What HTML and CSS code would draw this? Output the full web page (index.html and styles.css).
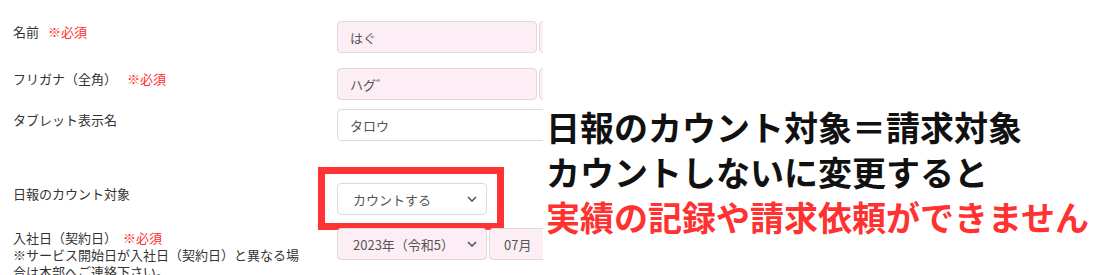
FILE: index.html
```html
<!DOCTYPE html>
<html lang="ja">
<head>
   <meta charset="UTF-8">
   <meta name="viewport" content="width=device-width, initial-scale=1.0">
   <title>日報のカウント対象</title>
   <link rel="stylesheet" href="styles.css">
</head>
<body>
   <div class="page">
       <div class="form">
           <div class="row row-name">
               <div class="label">名前 <span class="req">※必須</span></div>
               <div class="fields">
                   <div class="input pink w-half">はぐ</div>
                   <div class="input pink w-rest"></div>
               </div>
           </div>

           <div class="row row-kana">
               <div class="label">フリガナ（全角）<span class="req">※必須</span></div>
               <div class="fields">
                   <div class="input pink w-half">ハグ゛</div>
                   <div class="input pink w-rest"></div>
               </div>
           </div>

           <div class="row row-tablet">
               <div class="label">タブレット表示名</div>
               <div class="fields">
                   <div class="input w-full">タロウ</div>
               </div>
           </div>

           <div class="row row-count">
               <div class="label">日報のカウント対象</div>
               <div class="fields">
                   <div class="highlight">
                       <div class="select">
                           <span>カウントする</span>
                           <svg class="chevron" width="10" height="6" viewBox="0 0 10 6"><path d="M1 1 L5 5 L9 1" fill="none" stroke="#555" stroke-width="1.6"/></svg>
                       </div>
                   </div>
               </div>
           </div>

           <div class="row row-date">
               <div class="label">
                   入社日（契約日）<span class="req">※必須</span><br>
                   ※サービス開始日が入社日（契約日）と異なる場合は本部へご連絡下さい。
               </div>
               <div class="fields">
                   <div class="select pink">
                       <span>2023年（令和5）</span>
                       <svg class="chevron" width="10" height="6" viewBox="0 0 10 6"><path d="M1 1 L5 5 L9 1" fill="none" stroke="#555" stroke-width="1.6"/></svg>
                   </div>
                   <div class="input pink w-month">07月</div>
               </div>
           </div>
       </div>

       <div class="note">
           <p>日報のカウント対象＝請求対象</p>
           <p>カウントしないに変更すると</p>
           <p class="alert">実績の記録や請求依頼ができません</p>
       </div>
   </div>
</body>
</html>
```

FILE: styles.css
```css
body {
    margin: 0;
    background-color: #ffffff;
    font-family: "Noto Sans CJK JP", "Noto Sans", sans-serif;
    color: #333;
}

.page {
    display: flex;
    width: 1099px;
    height: 275px;
    overflow: hidden;
}

.form {
    width: 543px;
    flex-shrink: 0;
    overflow: hidden;
    padding-top: 21px;
    font-size: 13px;
}

.row {
    display: flex;
}

.label {
    width: 337px;
    flex-shrink: 0;
    padding-left: 13px;
    padding-right: 30px;
    box-sizing: border-box;
    line-height: 17px;
}

.req {
    color: #ff2b2b;
    margin-left: 6px;
}

.row-kana .req {
    margin-left: 10px;
}

.fields {
    display: flex;
    gap: 2px;
    width: 240px;
    flex-shrink: 0;
}

.row-name .label,
.row-kana .label,
.row-tablet .label {
    padding-top: 2px;
}

.row-kana {
    margin-top: 15px;
}

.row-tablet {
    margin-top: 9px;
}

.row-count {
    margin-top: 26px;
}

.row-count .label {
    width: 318px;
    padding-top: 18px;
}

.row-date {
    margin-top: -2px;
}

.row-date .label {
    padding-top: 1px;
}

.input,
.select {
    height: 32px;
    box-sizing: border-box;
    border: 1px solid #dedada;
    border-radius: 4px;
    background-color: #fff;
    color: #555;
    display: flex;
    align-items: center;
    padding-left: 12px;
    flex-shrink: 0;
}

.pink {
    background-color: #fdedf4;
}

.w-half {
    width: 200px;
}

.w-rest {
    width: 30px;
}

.w-full {
    width: 220px;
}

.w-month {
    width: 60px;
    padding-left: 14px;
}

.highlight {
    border: 7px solid #ff3333;
    padding: 9px 10px 8px 12px;
}

.select {
    width: 150px;
    justify-content: space-between;
    padding-left: 15px;
    padding-right: 9px;
}

.chevron {
    display: block;
}

.note {
    padding-top: 104px;
    padding-left: 3px;
    font-size: 34px;
    font-weight: bold;
    color: #111;
    white-space: nowrap;
}

.note p {
    margin: 0;
    line-height: 45px;
}

.note .alert {
    color: #ff3131;
}
```
